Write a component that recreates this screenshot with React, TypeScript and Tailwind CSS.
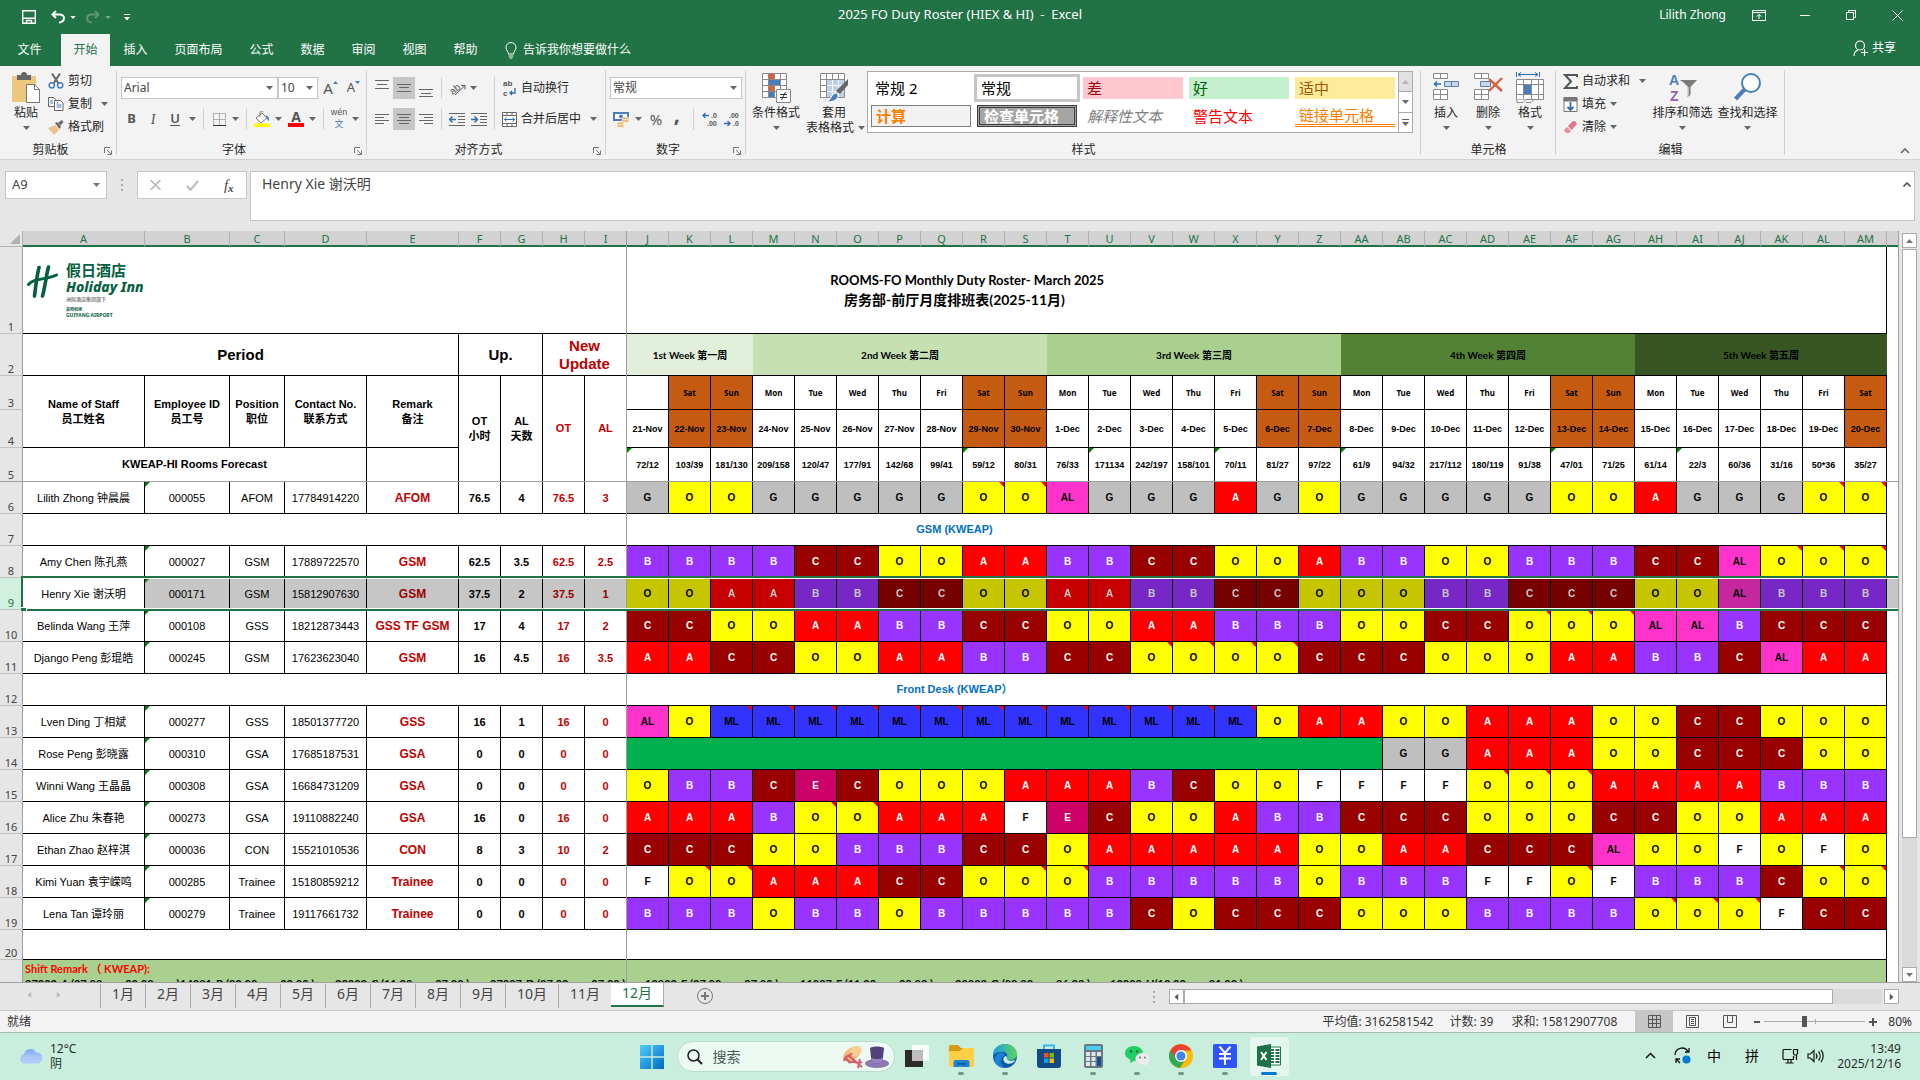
import React from 'react';

/* ---------- roster data ---------- */

type Staff = {
  row: number;
  name: string;
  id: string;
  pos: string;
  phone: string;
  remark: string;
  ot: string;
  al: string;
  newOt: string;
  newAl: string;
  shifts: string;
};

const COLS = 'A B C D E F G H I J K L M N O P Q R S T U V W X Y Z AA AB AC AD AE AF AG AH AI AJ AK AL AM'.split(' ');
const DAYS = ['', 'Sat', 'Sun', 'Mon', 'Tue', 'Wed', 'Thu', 'Fri', 'Sat', 'Sun', 'Mon', 'Tue', 'Wed', 'Thu', 'Fri', 'Sat', 'Sun', 'Mon', 'Tue', 'Wed', 'Thu', 'Fri', 'Sat', 'Sun', 'Mon', 'Tue', 'Wed', 'Thu', 'Fri', 'Sat'];
const DATES = Array.from({ length: 30 }, (_, i) => (i < 10 ? `${21 + i}-Nov` : `${i - 9}-Dec`));
const FORECAST = '72/12 103/39 181/130 209/158 120/47 177/91 142/68 99/41 59/12 80/31 76/33 171134 242/197 158/101 70/11 81/27 97/22 61/9 94/32 217/112 180/119 91/38 47/01 71/25 61/14 22/3 60/36 31/16 50*36 35/27'.split(' ');
const FLAGGED = [0, 8, 11, 14, 17, 22, 25];

const WEEKS: [string, number, string][] = [
  ['1st Week 第一周', 3, 'bg-[#e2efda]'],
  ['2nd Week 第二周', 7, 'bg-[#c6e0b4]'],
  ['3rd Week 第三周', 7, 'bg-[#a9d08e]'],
  ['4th Week 第四周', 7, 'bg-[#548235]'],
  ['5th Week 第五周', 6, 'bg-[#375623]'],
];

const s = (row: number, name: string, id: string, pos: string, phone: string, remark: string, ot: string, al: string, newOt: string, newAl: string, shifts: string): Staff => ({ row, name, id, pos, phone, remark, ot, al, newOt, newAl, shifts });

const LEAD = s(6, 'Lilith Zhong 钟晨晨', '000055', 'AFOM', '17784914220', 'AFOM', '76.5', '4', '76.5', '3', 'G O O G G G G G O* O* AL G G G A G O G G G G G O O A G G G O* O*');
const GSM = [
  s(8, 'Amy Chen 陈孔燕', '000027', 'GSM', '17889722570', 'GSM', '62.5', '3.5', '62.5', '2.5', 'B B B B C C O O A A B B C C O O A B B O O B B B C C AL O* O* O*'),
  s(9, 'Henry Xie 谢沃明', '000171', 'GSM', '15812907630', 'GSM', '37.5', '2', '37.5', '1', 'O O A A B B C C O O A A B B C C O O O B B C C C O O AL B B B'),
  s(10, 'Belinda Wang 王萍', '000108', 'GSS', '18212873443', 'GSS TF GSM', '17', '4', '17', '2', 'C C O O A A B B C C O O A A B B B O O C C O* O* O* AL AL B C C C'),
  s(11, 'Django Peng 彭琨皓', '000245', 'GSM', '17623623040', 'GSM', '16', '4.5', '16', '3.5', 'A A C C O O A A B B C C O* O* O* O* C C C O O O A A B B C AL A A'),
];
const DESK = [
  s(13, 'Lven Ding 丁相斌', '000277', 'GSS', '18501377720', 'GSS', '16', '1', '16', '0', 'AL O ML* ML* ML* ML* ML* ML* ML* ML* ML* ML* ML* ML* ML* O A A O O A A A O O C C O O O'),
  s(14, 'Rose Peng 彭晓露', '000310', 'GSA', '17685187531', 'GSA', '0', '0', '0', '0', 'LONG G G A A A O O C C C O O'),
  s(15, 'Winni Wang 王晶晶', '000308', 'GSA', '16684731209', 'GSA', '0', '0', '0', '0', 'O B B C E C O O O A A A B C O O F F F F O* O* O* A A A A B B B'),
  s(16, 'Alice Zhu 朱春艳', '000273', 'GSA', '19110882240', 'GSA', '16', '0', '16', '0', 'A A A B O* O* A A A F E C O O A B B C C C O O O C C O O A A A'),
  s(17, 'Ethan Zhao 赵梓淇', '000036', 'CON', '15521010536', 'CON', '8', '3', '10', '2', 'C C C O O B B B C C O A A A A A O O A A C C C AL O O F O F O'),
  s(18, 'Kimi Yuan 袁宇嵘鸣', '000285', 'Trainee', '15180859212', 'Trainee', '0', '0', '0', '0', 'F O* O* A A A C C O O* O* B B B B B O B B B F F O* F B B B C O* O*'),
  s(19, 'Lena Tan 谭玲丽', '000279', 'Trainee', '19117661732', 'Trainee', '0', '0', '0', '0', 'B B B O B B O B B B B B C O C C C O O O B B B B O* O* O* F C C'),
];

const TONE: Record<string, string> = {
  G: 'bg-[#bfbfbf] text-black',
  O: 'bg-[#ffff00] text-black',
  A: 'bg-[#ff0000] text-white',
  B: 'bg-[#9933ff] text-white',
  C: 'bg-[#990000] text-white',
  E: 'bg-[#cc0066] text-white',
  F: 'bg-white text-black',
  AL: 'bg-[#ff33cc] text-black',
  ML: 'bg-[#3333ff] text-black',
};
const TONE_SELECTED: Record<string, string> = {
  O: 'bg-[#c6c600] text-black',
  A: 'bg-[#c60000] text-[#c6c6c6]',
  B: 'bg-[#7727c6] text-[#c6c6c6]',
  C: 'bg-[#770000] text-[#c6c6c6]',
  AL: 'bg-[#c6279e] text-black',
};

const REMARKS = ['07003-A (07:00 —— 03:30 —— )', '14301-B (03:30 —— 23:00 )', '23003-C (11:00 —— 07:30 )', '07007-D (07:00 —— 07:00 )', '19003-E (07:00 —— 07:00 )', '11007-F (11:00 —— 08:00 )', '23003-G (09:00 —— 06:00 )', '13008-H(13:00 —— 21:00 )'];

/* ---------- sheet ---------- */

const Flag = () => <i className="absolute left-0 top-0 border-r-[5px] border-t-[5px] border-r-transparent border-t-[#008000]" />;
const Note = () => <i className="absolute right-0 top-0 border-l-[5px] border-t-[5px] border-l-transparent border-t-[#ff0000]" />;

function RowHead({ n, className }: { n: number; className: string }) {
  return (
    <th scope="row" className={`border-b border-r border-b-[#c2c2c2] border-r-[#9f9f9f] pb-px align-bottom text-[11px] font-normal leading-[11px] [font-family:'Noto_Sans',sans-serif] ${className || 'bg-[#e6e6e6] text-[#444]'}`}>
      {n}
    </th>
  );
}

const cell = 'relative border-b border-r border-black text-center';
const freeze = 'relative border-b border-r border-b-black border-r-[#9f9f9f] text-center';

function StaffRow({ p }: { p: Staff }) {
  const sel = p.row === 9;
  const dim = sel ? 'bg-[#c6c6c6]' : 'bg-white';
  const red = sel ? 'text-[#990000]' : 'text-[#c00000]';
  return (
    <tr className="h-8 text-[11px] leading-[14px]">
      <RowHead n={p.row} className={sel ? 'bg-[#d2f0e0] text-[#217346]' : ''} />
      <td className={`${cell} bg-white`}>
        {p.name}
        {sel && (
          <span className="pointer-events-none absolute -left-0.5 -top-0.5 z-10 h-[35px] w-[1890px] border-2 border-[#217346] shadow-[inset_0_0_0_1px_white]">
            <i className="absolute -bottom-0.5 -left-0.5 h-1 w-1.5 border-r border-t border-white bg-[#217346]" />
          </span>
        )}
      </td>
      <td className={`${cell} ${dim}`}><Flag />{p.id}</td>
      <td className={`${cell} ${dim}`}>{p.pos}</td>
      <td className={`${cell} ${dim}`}>{p.phone}</td>
      <td className={`${cell} ${dim} ${red} text-[12px] font-bold`}>{p.remark}</td>
      <td className={`${cell} ${dim} font-bold`}>{p.ot}</td>
      <td className={`${cell} ${dim} font-bold`}>{p.al}</td>
      <td className={`${cell} ${dim} ${red} font-bold`}>{p.newOt}</td>
      <td className={`${freeze} ${dim} ${red} font-bold`}>{p.newAl}</td>
      {p.shifts.split(' ').map((raw, i) => {
        if (raw === 'LONG') return <td key={i} colSpan={18} className={`${cell} bg-[#00b050]`} />;
        const code = raw.replace('*', '');
        return (
          <td key={i} className={`${cell} ${(sel ? TONE_SELECTED : TONE)[code]} text-[10px] font-bold`}>
            {code}
            {raw.endsWith('*') && <Note />}
          </td>
        );
      })}
      <td className={dim} />
    </tr>
  );
}

function SectionRow({ n, children }: { n: number; children?: React.ReactNode }) {
  return (
    <tr className={n === 20 ? 'h-[30px]' : 'h-8'}>
      <RowHead n={n} className="" />
      <td colSpan={39} className={`${cell} bg-white text-[11px] font-bold text-[#0070c0]`}>{children}</td>
      <td className="bg-white" />
    </tr>
  );
}

function Logo() {
  return (
    <div className="absolute left-1 top-4 flex items-start gap-2 text-left text-[#05603f]">
      <svg width="31" height="34" viewBox="0 0 31 34" className="mt-0.5 shrink-0" fill="none" stroke="#05603f" strokeLinecap="round">
        <path d="M12 2.500C10 10 9 18 7.500 31M21.500 2C19 11 18.500 20 15.500 31" strokeWidth="3.600" />
        <path d="M1.500 19.500C7 12.500 18 15.500 29.500 10" strokeWidth="3" />
      </svg>
      <div className="flex flex-col [font-family:'Noto_Sans','Noto_Sans_CJK_SC',sans-serif]">
        <span className="text-[15px] font-bold leading-[15px]">假日酒店</span>
        <span className="whitespace-nowrap text-[14px] font-extrabold italic leading-[17px]">Holiday Inn</span>
        <span className="text-[5px] leading-[8px] text-[#888]">洲际酒店集团旗下</span>
        <span className="pt-1 text-[4px] leading-[5px]">贵阳机场</span>
        <span className="text-[5px] font-bold leading-[6px]">GUIYANG AIRPORT</span>
      </div>
    </div>
  );
}

function Sheet() {
  const head = 'relative border-b border-r border-black bg-white text-center text-[11px] font-bold leading-[15px]';
  return (
    <div className="relative min-w-0 flex-1 overflow-hidden border-r border-[#9f9f9f] bg-white [font-family:'Liberation_Sans','Noto_Sans_CJK_SC',sans-serif]">
      <table className="w-full table-fixed border-separate border-spacing-0 whitespace-nowrap text-black">
        <colgroup>
          <col className="w-[23px]" />
          <col className="w-[122px]" />
          <col className="w-[85px]" />
          <col className="w-[55px]" />
          <col className="w-[82px]" />
          <col className="w-[92px]" />
          {Array.from({ length: 34 }, (_, i) => <col key={i} className="w-[42px]" />)}
          <col />
        </colgroup>
        <thead>
          <tr className="h-4">
            <th className="relative border-b border-r border-[#b1b1b1] bg-[#e6e6e6]" aria-label="全选">
              <i className="absolute bottom-0.5 right-0.5 border-b-[10px] border-l-[10px] border-b-[#b1b1b1] border-l-transparent" />
            </th>
            {COLS.map((c) => (
              <th key={c} scope="col" className="border-b-2 border-r border-b-[#217346] border-r-[#b1b1b1] bg-[#d2d2d2] text-[11px] font-normal leading-[13px] text-[#217346] [font-family:'Noto_Sans',sans-serif]">{c}</th>
            ))}
            <th className="border-b-2 border-[#217346] bg-[#d2d2d2]" />
          </tr>
        </thead>
        <tbody>
          <tr className="h-[87px]">
            <RowHead n={1} className="" />
            <td colSpan={39} className={`${cell} bg-white text-[13px] font-bold leading-[20px] [font-family:Lato,'Noto_Sans_CJK_SC',sans-serif]`}>
              <Logo />
              <p className="whitespace-pre">{'        ROOMS-FO Monthly Duty Roster- March 2025'}</p>
              <p className="text-[14px]">房务部-前厅月度排班表(2025-11月)</p>
            </td>
            <td />
          </tr>
          <tr className="h-[42px] text-[15px] font-bold leading-[18px]">
            <RowHead n={2} className="" />
            <td colSpan={5} className={cell}>Period</td>
            <td colSpan={2} className={cell}>Up.</td>
            <td colSpan={2} className={`${freeze} text-[#c00000]`}>New<br />Update</td>
            {WEEKS.map(([t, n, bg]) => (
              <td key={t} colSpan={n} className={`border-b border-black text-center text-[10px] [font-family:Lato,'Noto_Sans_CJK_SC',sans-serif] ${bg}`}>{t}</td>
            ))}
            <td />
          </tr>
          <tr className="h-[34px]">
            <RowHead n={3} className="" />
            <th rowSpan={2} className={head}>Name of Staff<br />员工姓名</th>
            <th rowSpan={2} className={head}>Employee ID<br />员工号</th>
            <th rowSpan={2} className={head}>Position<br />职位</th>
            <th rowSpan={2} className={head}>Contact No.<br />联系方式</th>
            <th rowSpan={2} className={head}>Remark<br />备注</th>
            <th rowSpan={3} className={head}>OT<br />小时</th>
            <th rowSpan={3} className={head}>AL<br />天数</th>
            <th rowSpan={3} className={`${head} text-[#c00000]`}>OT</th>
            <th rowSpan={3} className={`${freeze} text-[11px] text-[#c00000]`}>AL</th>
            {DAYS.map((d, i) => (
              <th key={i} className={`${cell} text-[8px] leading-[12px] [font-family:'Noto_Sans',sans-serif] ${d[0] === 'S' ? 'bg-[#c55a11]' : 'bg-white'}`}>{d}</th>
            ))}
            <td />
          </tr>
          <tr className="h-[38px]">
            <RowHead n={4} className="" />
            {DATES.map((d, i) => (
              <th key={d} className={`${cell} text-[9px] leading-[12px] ${DAYS[i][0] === 'S' ? 'bg-[#c55a11]' : 'bg-white'}`}>{d}</th>
            ))}
            <td />
          </tr>
          <tr className="h-[34px]">
            <RowHead n={5} className="" />
            <td colSpan={4} className={head}>KWEAP-HI Rooms Forecast</td>
            <td className={head} />
            {FORECAST.map((f, i) => (
              <td key={i} className={`${cell} text-[9px] font-bold leading-[12px]`}>
                {FLAGGED.includes(i) && <Flag />}
                {f}
              </td>
            ))}
            <td />
          </tr>
          <StaffRow p={LEAD} />
          <SectionRow n={7}>GSM (KWEAP)</SectionRow>
          {GSM.map((p) => <StaffRow key={p.row} p={p} />)}
          <SectionRow n={12}>Front Desk (KWEAP）</SectionRow>
          {DESK.map((p) => <StaffRow key={p.row} p={p} />)}
          <SectionRow n={20} />
          <tr className="h-[60px]">
            <RowHead n={21} className="" />
            <td colSpan={39} className="border-r border-black bg-[#a9d08e] pl-0.5 text-left align-top text-[11px] font-bold [font-family:Lato,'Noto_Sans_CJK_SC',sans-serif]">
              <p className="leading-[17px] text-[#ff0000]">Shift Remark （ KWEAP):</p>
              <p className="flex leading-[14px]">
                {REMARKS.map((r) => <span key={r} className="w-[155px]">{r}</span>)}
              </p>
            </td>
            <td />
          </tr>
        </tbody>
      </table>
      <i className="absolute inset-y-0 left-[626px] w-px bg-[#9f9f9f]" />
      <i className="absolute inset-x-0 top-[250px] h-px bg-[#9f9f9f]" />
    </div>
  );
}

/* ---------- small parts ---------- */

const Down = ({ className = 'text-[#666]' }: { className?: string }) => (
  <svg width="7" height="4" viewBox="0 0 7 4" className={`shrink-0 ${className}`} fill="currentColor"><path d="M0 0h7L3.500 4z" /></svg>
);

function Item({ className, label, children }: { className: string; label: string; children: React.ReactNode }) {
  return <button aria-label={label} className={`flex h-[22px] shrink-0 items-center justify-center ${className}`}>{children}</button>;
}

const Sep = ({ className }: { className: string }) => (
  <span className={`flex h-[22px] shrink-0 justify-center ${className}`}><i className="w-px bg-[#d2d2d2]" /></span>
);

function Group({ title, className, launcher, children }: { title: string; className: string; launcher?: boolean; children: React.ReactNode }) {
  return (
    <section className={`relative flex shrink-0 flex-col after:absolute after:bottom-1 after:right-0 after:top-1 after:w-px after:bg-[#d2d2d2] ${className}`}>
      <div className="flex h-[76px]">{children}</div>
      <h2 className="text-center text-[12px] leading-4">{title}</h2>
      {launcher && (
        <button aria-label={`${title}设置`} className="absolute bottom-1 right-[5px]">
          <svg width="8" height="8" viewBox="0 0 8 8" fill="none" stroke="#777"><path d="M.5 6V.5H6M3 3l4 4M7.500 3.500v4h-4" /></svg>
        </button>
      )}
    </section>
  );
}

function Big({ label, className, down = true, children }: { label: string; className: string; down?: boolean; children: React.ReactNode }) {
  return (
    <button className={`flex shrink-0 flex-col items-center pt-[6px] text-[12px] leading-[14px] ${className}`}>
      <span className="flex h-[34px] items-start">{children}</span>
      <span className="whitespace-nowrap">{label}</span>
      {down && <Down className="mt-1.5 text-[#666]" />}
    </button>
  );
}

function Lines({ rows }: { rows: [number, number, number][] }) {
  return (
    <svg width="14" height="20" viewBox="0 0 14 20" stroke="#666">
      {rows.map(([y, a, b]) => <path key={y} d={`M${a} ${y}H${b}`} />)}
    </svg>
  );
}

const TableIcon = ({ children }: { children?: React.ReactNode }) => (
  <svg width="30" height="31" viewBox="0 0 30 31" fill="none">
    <path d="M1.500 1.500h24v24h-24zM1.500 7.500h24M1.500 13.500h24M1.500 19.500h24M7.500 1.500v24M13.500 1.500v24M19.500 1.500v24" fill="#fff" stroke="#8a8a8a" />
    {children}
  </svg>
);

function FieldSelect({ label, value, className }: { label: string; value: string; className: string }) {
  return (
    <span className={`relative flex h-[22px] shrink-0 items-center border border-[#c6c6c6] bg-white ${className}`}>
      <select aria-label={label} defaultValue={value} className="h-full w-full appearance-none bg-transparent pl-0.5 text-[12px] text-[#444] outline-none">
        <option>{value}</option>
      </select>
      <span className="pointer-events-none absolute right-1"><Down /></span>
    </span>
  );
}

/* ---------- title and tabs ---------- */

function TitleBar() {
  return (
    <header className="grid h-[34px] shrink-0 grid-cols-[1fr_auto_1fr] items-center bg-[#217346] pb-1 text-[12px] text-white">
      <div className="flex items-center pl-[22px] pt-1">
        <button aria-label="保存"><svg width="14" height="14" viewBox="0 0 14 14" fill="none" stroke="#fff" strokeWidth="1.400"><path d="M.7.7h12.600v12.600H.7zM.7 8.200h12.600M4.500 13V10.500h5V13" /></svg></button>
        <button aria-label="撤消" className="ml-[15px]"><svg width="14" height="14" viewBox="0 0 14 14" fill="none" stroke="#fff" strokeWidth="2"><path d="M5 1L1.500 4.500 5 8M1.500 4.500H8.500C15 4.500 14 12 8 12.500" /></svg></button>
        <Down className="ml-[5px] h-[3px] w-[6px] text-white" />
        <button aria-label="恢复" className="ml-[10px] opacity-25"><svg width="14" height="14" viewBox="0 0 14 14" fill="none" stroke="#fff" strokeWidth="2"><path d="M9 1l3.500 3.500L9 8M12.500 4.500H5.500C-1 4.500 0 12 6 12.500" /></svg></button>
        <Down className="ml-[5px] h-[3px] w-[6px] text-white opacity-40" />
        <button aria-label="自定义快速访问工具栏" className="ml-[13px]"><svg width="6" height="7" viewBox="0 0 6 7" fill="#fff"><path d="M0 0h6v1H0zM0 3h6L3 6.500z" /></svg></button>
      </div>
      <h1 className="whitespace-pre text-[13px]">{'2025 FO Duty Roster (HIEX & HI)  -  Excel'}</h1>
      <div className="flex items-center justify-end">
        <span className="mr-[10px]">Lilith Zhong</span>
        <button aria-label="功能区显示选项" className="flex w-[46px] justify-center"><svg width="14" height="11" viewBox="0 0 14 11" fill="none" stroke="#fff"><path d="M.5.5h13v10H.5zM.5 2.500h13M7 9V4.500M4.800 6.500L7 4.300l2.200 2.200" /></svg></button>
        <button aria-label="最小化" className="flex w-[46px] justify-center"><i className="h-px w-[10px] bg-white" /></button>
        <button aria-label="向下还原" className="flex w-[46px] justify-center"><svg width="10" height="10" viewBox="0 0 10 10" fill="none" stroke="#fff"><path d="M.5 2.500h7v7h-7zM2.500 2.500v-2h7v7h-2" /></svg></button>
        <button aria-label="关闭" className="flex w-[46px] justify-center"><svg width="11" height="11" viewBox="0 0 11 11" stroke="#fff"><path d="M.5.5l10 10M10.500.5l-10 10" /></svg></button>
      </div>
    </header>
  );
}

function TabBar() {
  return (
    <nav className="flex h-8 shrink-0 items-stretch bg-[#217346] text-[12px] text-white">
      <button className="w-[61px] pr-0.5">文件</button>
      <button className="w-[49px] bg-[#f3f3f3] text-[#217346]">开始</button>
      {['插入', '页面布局', '公式', '数据', '审阅', '视图', '帮助'].map((t) => (
        <button key={t} className={t.length > 2 ? 'w-[75px]' : 'w-[51px]'}>{t}</button>
      ))}
      <button className="flex items-center gap-1.5 pl-[14px]">
        <svg width="12" height="17" viewBox="0 0 12 17" fill="none" stroke="#fff"><path d="M3.500 12C3.500 9.500 1 8.500 1 5.500a5 5 0 0110 0C11 8.500 8.500 9.500 8.500 12zM3.500 14h5M4.500 16h3" /></svg>
        告诉我你想要做什么
      </button>
      <button className="ml-auto flex items-center gap-1 pb-1 pr-6">
        <svg width="15" height="17" viewBox="0 0 15 17" fill="none" stroke="#fff" strokeWidth="1.200"><circle cx="7" cy="5.500" r="4.500" /><path d="M1 16c0-3 1.500-5 4-6M8 12.500h7M11.500 9v7" /></svg>
        共享
      </button>
    </nav>
  );
}

/* ---------- ribbon ---------- */

const galleryBase = 'flex h-[22px] items-center px-1 text-left text-[15px] leading-[20px] whitespace-nowrap';

function Ribbon() {
  return (
    <div className="flex h-[94px] shrink-0 border-b border-[#d2d2d2] bg-[#f3f3f3] text-[#262626]">
      <Group title="剪贴板" className="w-[117px] [&>h2]:pr-4" launcher>
        <Big label="粘贴" className="ml-[10px] w-[32px]">
          <svg width="30" height="31" viewBox="0 0 30 31"><path d="M1 4h24v26H1z" fill="#eec77f" /><path d="M6 3h4a3 3 0 016 0h4v5H6z" fill="#666" /><path d="M15.500 12.500h8l5 5v13h-13z" fill="#fff" stroke="#777" /><path d="M23.500 12.500v5h5" fill="none" stroke="#777" /></svg>
        </Big>
        <div className="flex flex-col gap-[9px] pl-[6px] pt-2 text-[12px] leading-[14px]">
          <button className="flex h-[14px] items-center gap-1">
            <svg width="16" height="16" viewBox="0 0 16 16" fill="none"><path d="M4 .5l6.500 10M12 .5l-6.500 10" stroke="#666" strokeWidth="2" /><circle cx="3.800" cy="12.300" r="2.600" stroke="#4a7ebb" strokeWidth="1.500" /><circle cx="12.200" cy="12.300" r="2.600" stroke="#4a7ebb" strokeWidth="1.500" /></svg>
            剪切
          </button>
          <button className="flex h-[14px] items-center gap-1">
            <svg width="16" height="14" viewBox="0 0 16 14" fill="#fff" stroke="#666"><path d="M.5.500h5l2 2v7h-7z" /><path d="M6.500 3.500h6l2.500 2.500v7.500H6.500z" /><path d="M2 4h3M2 6h3M8.500 8h5M8.500 10h5M8.500 6h2" stroke="#4a7ebb" /></svg>
            复制
            <span className="pl-[5px]"><Down /></span>
          </button>
          <button className="flex h-[14px] items-center gap-1">
            <svg width="16" height="15" viewBox="0 0 16 15"><path d="M0 8l7-3 4 5-5 5z" fill="#eec08a" /><path d="M7 3l2-1 4 5-1.500 2zM10 3l4-3 1.500 2-3 3.500z" fill="#666" /></svg>
            格式刷
          </button>
        </div>
      </Group>

      <Group title="字体" className="w-[250px] [&>h2]:pr-4" launcher>
        <div className="flex flex-col gap-[9px] pl-1 pt-[11px]">
          <div className="flex items-center">
            <FieldSelect label="字体" value="Arial" className="w-[157px]" />
            <FieldSelect label="字号" value="10" className="w-[40px]" />
            <Item label="增大字号" className="w-[25px] text-[15px] text-[#555]">A<svg width="5" height="3" viewBox="0 0 5 3" className="mb-3" fill="#4a7ebb"><path d="M0 3h5L2.500 0z" /></svg></Item>
            <Item label="减小字号" className="w-[21px] text-[13px] text-[#555]">A<svg width="5" height="3" viewBox="0 0 5 3" className="mb-3" fill="#4a7ebb"><path d="M0 0h5L2.500 3z" /></svg></Item>
          </div>
          <div className="flex items-center text-[#555]">
            <Item label="加粗" className="w-[21px] text-[13px] font-bold">B</Item>
            <Item label="倾斜" className="w-[22px] text-[14px] italic [font-family:'Liberation_Serif',serif]">I</Item>
            <Item label="下划线" className="w-[22px] text-[13px] font-semibold underline underline-offset-2">U</Item>
            <Item label="下划线样式" className="w-3"><Down /></Item>
            <Sep className="w-[10px]" />
            <Item label="边框" className="w-[22px]"><svg width="13" height="13" viewBox="0 0 13 13" fill="none" stroke="#777" strokeDasharray="1 1"><path d="M.5.5h12v12M.5.5v12M6.500.5v12M.5 6.500h12" /><path d="M0 12.500h13" stroke="#333" strokeDasharray="none" /></svg></Item>
            <Item label="边框样式" className="w-[10px]"><Down /></Item>
            <Sep className="w-3" />
            <Item label="填充颜色" className="w-5"><svg width="16" height="16" viewBox="0 0 16 16"><path d="M2 7l6-5 5 5-6 5z" fill="#fff" stroke="#777" /><path d="M6 6V1.500a1.500 1.500 0 013 0" fill="none" stroke="#777" /><path d="M11 4.500c3 0 4.500 2 4 6l-2-3z" fill="#4a7ebb" /><path d="M0 12.500h16V16H0z" fill="#ff0" /></svg></Item>
            <Item label="填充颜色选项" className="w-3"><Down /></Item>
            <Item label="字体颜色" className="w-6"><span className="flex h-4 w-4 items-end justify-center border-b-[4px] border-[#f00] text-[14px] font-bold leading-[13px]">A</span></Item>
            <Item label="字体颜色选项" className="w-2"><Down /></Item>
            <Sep className="w-[14px]" />
            <Item label="拼音" className="w-[18px] flex-col text-[9px] leading-[11px] [font-family:'Liberation_Sans','Noto_Sans_CJK_SC',sans-serif]"><span>wén</span><span className="leading-[13px] text-[#4a7ebb]">文</span></Item>
            <Item label="拼音选项" className="w-[14px]"><Down /></Item>
          </div>
        </div>
      </Group>

      <Group title="对齐方式" className="w-[239px] [&>h2]:pr-4" launcher>
        <div className="flex flex-col gap-[9px] pl-1 pt-[11px]">
          <div className="flex items-center">
            <Item label="顶端对齐" className="w-[22px]"><Lines rows={[[2.5, 0, 14], [6.5, 2, 12], [10.5, 0, 14]]} /></Item>
            <Item label="垂直居中" className="w-[22px] bg-[#c6c6c6]"><Lines rows={[[6.5, 0, 14], [9.5, 2, 12], [13.5, 0, 14]]} /></Item>
            <Item label="底端对齐" className="w-[22px]"><Lines rows={[[11.5, 0, 14], [15.5, 2, 12], [18.5, 0, 14]]} /></Item>
            <Sep className="w-2" />
            <Item label="方向" className="w-6"><svg width="17" height="15" viewBox="0 0 17 15" className="overflow-visible" fill="none" stroke="#555"><text x="0" y="12" transform="rotate(-40 5 8)" fill="#555" stroke="none" fontSize="10" fontFamily="Liberation Sans">ab</text><path d="M6 14L15.500 5M12 4.500h4v4" /></svg></Item>
            <Item label="方向选项" className="w-2"><Down /></Item>
          </div>
          <div className="flex items-center">
            <Item label="左对齐" className="w-[22px]"><Lines rows={[[5.5, 0, 14], [8.5, 0, 9], [11.5, 0, 14], [14.5, 0, 9]]} /></Item>
            <Item label="居中" className="w-[22px] bg-[#c6c6c6]"><Lines rows={[[5.5, 0, 14], [8.5, 2, 12], [11.5, 0, 14], [14.5, 2, 12]]} /></Item>
            <Item label="右对齐" className="w-[22px]"><Lines rows={[[5.5, 0, 14], [8.5, 5, 14], [11.5, 0, 14], [14.5, 5, 14]]} /></Item>
            <Sep className="w-2" />
            <Item label="减少缩进" className="w-6"><svg width="16" height="13" viewBox="0 0 16 13" fill="none" stroke="#666"><path d="M0 .5h16M9 3.500h7M9 6.500h7M9 9.500h7M0 12.500h16" /><path d="M0 6.500h7M3.500 3.500l-3 3 3 3" stroke="#2e6db4" strokeWidth="1.500" /></svg></Item>
            <Item label="增加缩进" className="w-5"><svg width="16" height="13" viewBox="0 0 16 13" fill="none" stroke="#666"><path d="M0 .5h16M9 3.500h7M9 6.500h7M9 9.500h7M0 12.500h16" /><path d="M0 6.500h7M3.500 3.500l3 3-3 3" stroke="#2e6db4" strokeWidth="1.500" /></svg></Item>
          </div>
        </div>
        <i className="ml-[5px] mt-[10px] h-[54px] w-px shrink-0 bg-[#d2d2d2]" />
        <div className="flex flex-col gap-[9px] pl-[7px] pt-[11px] text-[12px]">
          <button className="flex h-[22px] items-center gap-1">
            <svg width="15" height="18" viewBox="0 0 15 18" className="overflow-visible" fontFamily="Liberation Sans" fontSize="8" fontWeight="bold" fill="#555"><text x="1" y="7">ab</text><text x="1" y="17">c</text><path d="M13 9v5H8M10 12l-2 2 2 2" fill="none" stroke="#2e6db4" strokeWidth="1.300" /></svg>
            自动换行
          </button>
          <button className="flex h-[22px] items-center gap-1">
            <svg width="15" height="15" viewBox="0 0 15 15" fill="#fff" stroke="#666"><path d="M.5.5h14v14H.5zM.5 3.500h14M.5 11.500h14M5 .5v3M10 .5v3M5 11.500v3M10 11.500v3" /><path d="M2.500 7.500h10M4.500 5.500l-2 2 2 2M10.500 5.500l2 2-2 2" fill="none" stroke="#2e6db4" /></svg>
            合并后居中
            <span className="pl-[5px]"><Down /></span>
          </button>
        </div>
      </Group>

      <Group title="数字" className="w-[140px] [&>h2]:pr-4" launcher>
        <div className="flex flex-col gap-[9px] pl-1 pt-[11px]">
          <FieldSelect label="数字格式" value="常规" className="w-[132px]" />
          <div className="flex items-center text-[#555]">
            <Item label="会计格式" className="w-[22px]"><svg width="17" height="17" viewBox="0 0 17 17"><path d="M0 1h16v9H0z" fill="#4a7ebb" /><path d="M2 3h12v5H2z" fill="#fff" /><circle cx="8" cy="5.500" r="2" fill="#4a7ebb" /><g fill="#eebf73" stroke="#fff" strokeWidth=".5"><rect x="9" y="6" width="7" height="3" rx="1.500" /><rect x="9" y="8.500" width="7" height="3" rx="1.500" /><rect x="4" y="11" width="7" height="3" rx="1.500" /><rect x="4" y="13.500" width="7" height="3" rx="1.500" /></g></svg></Item>
            <Item label="会计格式选项" className="w-3"><Down /></Item>
            <Item label="百分比样式" className="w-6 text-[15px]">%</Item>
            <Item label="千位分隔样式" className="w-[18px] pb-3 text-[22px] font-bold">,</Item>
            <Sep className="w-[14px]" />
            <Item label="增加小数位数" className="w-5"><svg width="16" height="16" viewBox="0 0 16 16" fontSize="7" fontFamily="Liberation Sans" fontWeight="bold" fill="#555"><text x="9" y="7">.0</text><text x="5" y="15">.00</text><path d="M7 4.500H1M3.500 2L1 4.500 3.500 7" fill="none" stroke="#2e6db4" strokeWidth="1.300" /></svg></Item>
            <Item label="减少小数位数" className="w-6"><svg width="16" height="16" viewBox="0 0 16 16" fontSize="7" fontFamily="Liberation Sans" fontWeight="bold" fill="#555"><text x="5" y="7">.00</text><text x="9" y="15">.0</text><path d="M0 12.500h6M3.500 10L6 12.500 3.500 15" fill="none" stroke="#2e6db4" strokeWidth="1.300" /></svg></Item>
          </div>
        </div>
      </Group>

      <Group title="样式" className="w-[675px]">
        <Big label="条件格式" className="ml-[5px] w-[50px]">
          <TableIcon>
            <path d="M8 2h5v5H8zM8 14h5v5H8z" fill="#d9603b" /><path d="M8 8h11v5H8zM8 20h5v5H8z" fill="#4a7ebb" />
            <path d="M15.500 17.500h14v13h-14z" fill="#fff" stroke="#8a8a8a" /><path d="M19 22.500h7M19 25.500h7M24.500 20l-4 8" stroke="#333" />
          </TableIcon>
        </Big>
        <div className="ml-[5px] flex w-[61px] flex-col">
          <Big label="套用" className="w-[56px]" down={false}>
            <TableIcon>
              <path d="M8 8h17v17H8z" fill="#bdd0e9" /><path d="M8 13.500h17M8 19.500h17M13.500 8v17M19.500 8v17" stroke="#fff" />
              <path d="M29 7v6l-8 9-4-3z" fill="#666" /><path d="M8 30c4-2 4-8 9-9 4 1 3 9-9 9z" fill="#4a7ebb" stroke="#fff" />
            </TableIcon>
          </Big>
          <button className="flex items-center gap-1 whitespace-nowrap text-[12px] leading-[16px]">表格格式<Down /></button>
        </div>
        <div className="mt-[5px] flex h-[62px] w-[546px] border border-[#ababab] bg-white">
          <div className="grid flex-1 grid-cols-5 content-center gap-1.5 px-[3px] [font-family:'Noto_Sans','Noto_Sans_CJK_SC',sans-serif]">
            <button className={`${galleryBase} text-black`}>常规 2</button>
            <button className={`${galleryBase} bg-white text-black shadow-[0_0_0_3px_#c6c6c6]`}>常规</button>
            <button className={`${galleryBase} bg-[#ffc7ce] text-[#9c0006]`}>差</button>
            <button className={`${galleryBase} bg-[#c6efce] text-[#006100]`}>好</button>
            <button className={`${galleryBase} bg-[#ffeb9c] text-[#9c5700]`}>适中</button>
            <button className={`${galleryBase} border border-[#7f7f7f] bg-[#f2f2f2] font-bold text-[#fa7d00]`}>计算</button>
            <button className={`${galleryBase} border-[3px] border-double border-[#3f3f3f] bg-[#a5a5a5] font-bold text-white`}>检查单元格</button>
            <button className={`${galleryBase} italic text-[#7f7f7f]`}>解释性文本</button>
            <button className={`${galleryBase} text-[#ff0000]`}>警告文本</button>
            <button className={`${galleryBase} border-b-[3px] border-double border-[#ff8001] text-[#fa7d00]`}>链接单元格</button>
          </div>
          <div className="flex w-[14px] flex-col border-l border-[#ababab]">
            <button aria-label="上一行" className="flex flex-1 items-center justify-center bg-[#e1e1e1]"><Down className="rotate-180 text-[#b5b5b5]" /></button>
            <button aria-label="下一行" className="flex flex-1 items-center justify-center border-t border-[#ababab]"><Down /></button>
            <button aria-label="其他" className="flex flex-1 flex-col items-center justify-center gap-0.5 border-t border-[#ababab]"><i className="h-px w-[7px] bg-[#666]" /><Down /></button>
          </div>
        </div>
      </Group>

      <Group title="单元格" className="w-[135px]">
        <Big label="插入" className="ml-1 w-[42px]">
          <svg width="28" height="28" viewBox="0 0 28 28" fill="#fff" stroke="#8a8a8a"><path d="M1.500 1.500h14v5h-14zM8.500 1.500v5M1.500 17.500h14v10h-14zM8.500 17.500v10M1.500 22.500h14" /><path d="M12.500 9.500h14v5h-14zM19.500 9.500v5" fill="#c5d7ec" stroke="#5b7fa8" /><path d="M9 12H2.500M5 9.500L2.500 12 5 14.500" fill="none" stroke="#2e6db4" strokeWidth="1.600" /></svg>
        </Big>
        <Big label="删除" className="w-[42px]">
          <svg width="30" height="28" viewBox="0 0 30 28" fill="#fff" stroke="#8a8a8a"><path d="M1.500 1.500h14v5h-14zM8.500 1.500v5M1.500 17.500h14v10h-14zM8.500 17.500v10M1.500 22.500h14" /><path d="M7.500 9.500h10v5h-10z" fill="#c5d7ec" stroke="#5b7fa8" /><path d="M16 7l13 12M29 6L16 19" stroke="#d9603b" strokeWidth="2.400" /></svg>
        </Big>
        <Big label="格式" className="w-[42px]">
          <svg width="28" height="31" viewBox="0 0 28 31" fill="#fff" stroke="#8a8a8a"><path d="M.5 7.500h27v20H.5zM.5 12.500h27M.5 22.500h27M7.500 7.500v20M15.500 7.500v20M22.500 7.500v20" /><path d="M8 13h7v9H8z" fill="#4a7ebb" stroke="none" /><path d="M1 27.500v3h6l3-3M10 30.500h5l3-3" /><path d="M.5 0v5M23.500 0v5M2 2.500h20M5 .5l-3 2 3 2M19 .5l3 2-3 2" fill="none" stroke="#2e6db4" /></svg>
        </Big>
      </Group>

      <Group title="编辑" className="w-[229px]">
        <div className="flex w-[94px] flex-col gap-[9px] pl-[7px] pt-2 text-[12px] leading-[14px]">
          <button className="flex h-[14px] items-center gap-1 whitespace-nowrap"><svg width="15" height="15" viewBox="0 0 15 15" fill="none" stroke="#555" strokeWidth="2"><path d="M14 3V1H2l6 6.500L2 14h12v-2" /></svg>自动求和<span className="pl-[5px]"><Down /></span></button>
          <button className="flex h-[14px] items-center gap-1"><svg width="15" height="15" viewBox="0 0 15 15" fill="#fff" stroke="#777"><path d="M1 .5h13v14H1z" /><path d="M1 1h13v3H1z" fill="#777" /><path d="M7.500 5v8M4.500 10l3 3 3-3" fill="none" stroke="#2e6db4" strokeWidth="1.800" /></svg>填充<Down /></button>
          <button className="flex h-[14px] items-center gap-1"><svg width="15" height="13" viewBox="0 0 15 13"><path d="M1 9l3-3 4 4-2 2H3z" fill="#ef8b9f" /><path d="M5 5l5-5h2l2 3-5.500 6z" fill="#e5738c" /></svg>清除<Down /></button>
        </div>
        <Big label="排序和筛选" className="w-[65px]">
          <svg width="30" height="31" viewBox="0 0 30 31" fontFamily="Liberation Sans" fontSize="14" fontWeight="bold"><text x="1" y="13" fill="#4a7ebb">A</text><text x="2" y="29" fill="#9464b4">Z</text><path d="M12 8h17l-6.500 7v8l-3 2V15z" fill="#7a7a7a" /><path d="M14 9.500l6 6v8" fill="none" stroke="#fff" /></svg>
        </Big>
        <Big label="查找和选择" className="w-[65px]">
          <svg width="29" height="29" viewBox="0 0 29 29" fill="none" stroke="#4a7ebb"><circle cx="18" cy="11" r="9" strokeWidth="2" fill="#fff" /><path d="M11.500 17.500L2.500 27" strokeWidth="4" /></svg>
        </Big>
      </Group>
      <button aria-label="折叠功能区" className="ml-auto self-end pb-[5px] pr-[10px]"><svg width="10" height="6" viewBox="0 0 10 6" fill="none" stroke="#666" strokeWidth="1.600"><path d="M1 5l4-4 4 4" /></svg></button>
    </div>
  );
}

function FormulaBar() {
  return (
    <div className="flex h-[70px] shrink-0 items-start bg-[#e6e6e6] pb-[10px] pl-[5px] pr-[5px] pt-[10px] text-[#444]">
      <span className="relative flex h-7 w-[102px] items-center border border-[#c6c6c6] bg-white">
        <input aria-label="名称框" defaultValue="A9" className="w-full pl-1.5 text-[13px] outline-none" />
        <Down className="absolute right-[6px] text-[#777]" />
      </span>
      <span className="flex h-7 w-[30px] flex-col items-center justify-center gap-[3px]">
        <i className="h-0.5 w-0.5 bg-[#aaa]" /><i className="h-0.5 w-0.5 bg-[#aaa]" /><i className="h-0.5 w-0.5 bg-[#aaa]" />
      </span>
      <span className="flex h-7 w-[110px] items-center justify-around border border-[#c6c6c6] bg-white">
        <button aria-label="取消"><svg width="11" height="10" viewBox="0 0 11 10" stroke="#bbb" strokeWidth="1.600"><path d="M.5 0l10 10M10.500 0l-10 10" /></svg></button>
        <button aria-label="输入"><svg width="13" height="11" viewBox="0 0 13 11" fill="none" stroke="#bbb" strokeWidth="2"><path d="M1 6l3.500 4L12 1" /></svg></button>
        <button aria-label="插入函数" className="text-[15px] italic leading-none [font-family:'Liberation_Serif',serif]">f<sub className="text-[11px] font-bold">x</sub></button>
      </span>
      <span className="ml-[3px] flex h-[50px] flex-1 items-start border border-[#c6c6c6] bg-white">
        <textarea aria-label="编辑栏" defaultValue="Henry Xie 谢沃明" className="h-full flex-1 resize-none pl-[11px] pt-0.5 text-[14px] leading-[20px] outline-none" />
        <button aria-label="折叠编辑栏" className="pr-[3px] pt-[10px]"><svg width="8" height="5" viewBox="0 0 8 5" fill="none" stroke="#555" strokeWidth="1.600"><path d="M.5 4.500L4 1l3.500 3.500" /></svg></button>
      </span>
    </div>
  );
}

/* ---------- lower bars ---------- */

const scrollBtn = 'flex h-[15px] w-[15px] shrink-0 items-center justify-center border border-[#ababab] bg-white';

function VScroll() {
  return (
    <div className="flex w-[21px] shrink-0 flex-col bg-[#e6e6e6] pl-[3px] pt-0.5">
      <button aria-label="向上滚动" className={scrollBtn}><Down className="rotate-180 text-[#777]" /></button>
      <div className="mt-px flex w-[15px] flex-1 flex-col bg-[#dadada]"><i className="h-[82%] border border-[#ababab] bg-white" /></div>
      <button aria-label="向下滚动" className={scrollBtn}><Down className="text-[#777]" /></button>
    </div>
  );
}

function SheetTabs() {
  const tab = 'relative border-l border-[#ababab] text-[14px] leading-[20px] text-[#444] h-6 pb-1';
  return (
    <div className="flex h-[28px] shrink-0 items-start border-t border-[#9f9f9f] bg-[#e6e6e6]">
      <div className="flex h-6 w-[100px] items-center gap-[22px] pl-[26px] text-[#bbb]">
        <Down className="rotate-90" />
        <Down className="-rotate-90" />
      </div>
      <div className="flex items-start pt-px">
        {Array.from({ length: 11 }, (_, i) => (
          <button key={i} className={`${tab} ${i > 8 ? 'w-[53px]' : 'w-[45px]'}`}>{i + 1}月</button>
        ))}
      </div>
      <button className="h-6 w-[53px] border-b-2 border-r border-b-[#217346] border-r-[#ababab] bg-white pb-0.5 text-[14px] leading-[20px] text-[#217346]">12月</button>
      <button aria-label="新工作表" className="ml-[33px] mt-[5px]"><svg width="16" height="16" viewBox="0 0 16 16" fill="none" stroke="#777"><circle cx="8" cy="8" r="7.500" /><path d="M8 4v8M4 8h8" strokeWidth="2" /></svg></button>
      <div className="ml-auto flex w-[60%] max-w-[746px] items-center pt-[6px]">
        <span className="flex w-4 flex-col gap-[3px]"><i className="h-0.5 w-0.5 bg-[#aaa]" /><i className="h-0.5 w-0.5 bg-[#aaa]" /><i className="h-0.5 w-0.5 bg-[#aaa]" /></span>
        <button aria-label="向左滚动" className={scrollBtn}><Down className="rotate-90 text-[#555]" /></button>
        <div className="mr-0.5 flex h-[15px] flex-1 bg-[#dadada]"><i className="w-[93%] border border-[#ababab] bg-white" /></div>
        <button aria-label="向右滚动" className={scrollBtn}><Down className="-rotate-90 text-[#555]" /></button>
      </div>
      <span className="w-[21px]" />
    </div>
  );
}

function StatusBar() {
  return (
    <footer className="flex h-[23px] shrink-0 items-center border-b border-t border-b-[#a5bdb2] border-t-[#c6c6c6] bg-[#f3f3f3] text-[12px] text-[#333]">
      <span className="pl-[7px]">就绪</span>
      <span className="ml-auto">平均值: 3162581542</span>
      <span className="ml-4">计数: 39</span>
      <span className="ml-[18px] mr-[18px]">求和: 15812907708</span>
      <button aria-label="普通" className="flex h-full w-[38px] items-center justify-center bg-[#c6c6c6]"><svg width="13" height="13" viewBox="0 0 13 13" fill="none" stroke="#555"><path d="M.5.5h12v12H.5zM4.500.5v12M8.500.5v12M.5 4.500h12M.5 8.500h12" /></svg></button>
      <button aria-label="页面布局" className="flex w-[38px] justify-center"><svg width="13" height="13" viewBox="0 0 13 13" fill="none" stroke="#555"><path d="M.5.5h12v12H.5zM3.500 2.500h6v8h-6zM5 4.500h3M5 6.500h3M5 8.500h3" /></svg></button>
      <button aria-label="分页预览" className="flex w-[38px] justify-center"><svg width="14" height="13" viewBox="0 0 14 13" fill="none" stroke="#555"><path d="M.5.500h13v12H.5zM4.500.5v7h5v-7" /></svg></button>
      <button aria-label="缩小" className="ml-[5px] h-0.5 w-1.5 bg-[#555]" />
      <span className="relative mx-1 flex h-3 w-[101px] items-center">
        <i className="h-px w-full bg-[#aaa]" />
        <i className="absolute left-1/2 h-[5px] w-px bg-[#aaa]" />
        <input type="range" aria-label="缩放" min={0} max={100} defaultValue={39} className="absolute inset-0 w-full cursor-pointer appearance-none bg-transparent [&::-webkit-slider-thumb]:h-[11px] [&::-webkit-slider-thumb]:w-[5px] [&::-webkit-slider-thumb]:appearance-none [&::-webkit-slider-thumb]:bg-[#555]" />
      </span>
      <button aria-label="放大"><svg width="8" height="8" viewBox="0 0 8 8" stroke="#555" strokeWidth="2"><path d="M0 4h8M4 0v8" /></svg></button>
      <span className="ml-[11px] mr-2">80%</span>
    </footer>
  );
}

/* ---------- taskbar ---------- */

function Pinned({ label, state, children }: { label: string; state?: 'run' | 'on'; children: React.ReactNode }) {
  return (
    <button aria-label={label} className={`relative flex h-[39px] w-[39px] items-center justify-center rounded-[4px] pb-0.5 ${state === 'on' ? 'bg-[#e3f7ee]' : ''}`}>
      {children}
      {state === 'run' && <i className="absolute bottom-px h-[3px] w-1.5 rounded-full bg-[#75958a]" />}
      {state === 'on' && <i className="absolute bottom-px h-[3px] w-4 rounded-full bg-[#0078d4]" />}
    </button>
  );
}

function Taskbar() {
  return (
    <div className="grid h-[47px] shrink-0 grid-cols-[1fr_auto_1fr] items-center bg-[#c9eedd] text-[12px] text-[#1f2f29]">
      <button className="flex items-center gap-[7px] justify-self-start pb-0.5 pl-[19px] text-left leading-[15px]">
        <svg width="24" height="17" viewBox="0 0 24 17"><defs><linearGradient id="cl" x1="0" y1="0" x2="0" y2="1"><stop offset="0" stopColor="#7fa6f0" /><stop offset="1" stopColor="#cfe0fb" /></linearGradient></defs><path d="M5 16.500a5 5 0 010-9.500A6.500 6.500 0 0117 5.500a5.500 5.500 0 011.500 11z" fill="url(#cl)" /><path d="M1 12c5-6 8 0 12-1s7-4 10 0a5 5 0 01-4.500 5.500H5A5 5 0 011 12z" fill="#a9c4f5" opacity=".7" /></svg>
        <span>12°C<br />阴</span>
      </button>

      <div className="flex items-center">
        <button aria-label="开始" className="flex w-[44px] justify-center">
          <svg width="24" height="24" viewBox="0 0 24 24"><defs><linearGradient id="wn" x1="0" y1="0" x2="1" y2="1"><stop offset="0" stopColor="#4fd0f9" /><stop offset="1" stopColor="#0067c5" /></linearGradient></defs><path d="M0 0h11.300v11.300H0zM12.700 0H24v11.300H12.700zM0 12.700h11.300V24H0zM12.700 12.700H24V24H12.700z" fill="url(#wn)" /></svg>
        </button>
        <label className="mx-[3px] flex h-[31px] w-[218px] items-center rounded-full border border-[#b9dccd] bg-[#edf9f3] pl-[9px] pr-[4px]">
          <svg width="16" height="16" viewBox="0 0 16 16" fill="none" stroke="#222" strokeWidth="1.500"><circle cx="6.500" cy="6.500" r="5.500" /><path d="M10.500 10.500L15 15" strokeWidth="2" /></svg>
          <input aria-label="搜索" placeholder="搜索" className="min-w-0 flex-1 bg-transparent pl-[10px] text-[14px] outline-none placeholder:text-[#4b5c55]" />
          <svg width="48" height="24" viewBox="0 0 48 24">
            <ellipse cx="10" cy="9" rx="10" ry="6" fill="#f0bd7b" transform="rotate(-35 10 9)" /><ellipse cx="14" cy="6" rx="6" ry="5" fill="#f7cf93" transform="rotate(-35 14 6)" /><path d="M2 16c2-8 6-3 8-8M8 18c2-4 8 2 12-1M6 10l14 12M18 14l-2 9M3 12l5 6" fill="none" stroke="#d9566b" strokeWidth="2" />
            <ellipse cx="35" cy="18.500" rx="12" ry="4.500" fill="#8d7ab0" /><path d="M28 3c3-2 11-2 14 0l-1.500 14c-3 2-8 2-11 0z" fill="#54407a" /><path d="M29 12.500c3 2 9 2 12 0l-.5 4.500c-3 2-8 2-11 0z" fill="#9a83c4" />
          </svg>
        </label>
        <div className="flex items-center gap-[5px] pr-0.5">
          <Pinned label="任务视图"><svg width="24" height="24" viewBox="0 0 24 24"><path d="M0 6h18v17H0z" fill="#2b2b2b" /><path d="M7 1h17v16H7z" fill="#fff" opacity=".85" /><path d="M7 6h11v11H7z" fill="#bdbdbd" /></svg></Pinned>
          <Pinned label="文件资源管理器" state="run"><svg width="25" height="24" viewBox="0 0 25 24"><path d="M0 2.500Q0 1 1.500 1H9l3 3h12q1 0 1 1v5H0z" fill="#d89a10" /><path d="M0 7h11l3-3h11v18q0 1-1 1H1q-1 0-1-1z" fill="#ffcf48" /><path d="M4.500 23v-5q0-2 2-2h12q2 0 2 2v5z" fill="#1a85d6" /><path d="M8 20h9" stroke="#0b5ca8" strokeWidth="2" /></svg></Pinned>
          <Pinned label="Edge" state="run"><svg width="24" height="24" viewBox="0 0 24 24"><defs><linearGradient id="eg" x1="0" y1="0" x2="1" y2="0"><stop offset="0" stopColor="#1b9de2" /><stop offset="1" stopColor="#5fd35f" /></linearGradient></defs><circle cx="12" cy="12" r="12" fill="#0c59a4" /><path d="M0 12C0 5 5 0 12 0s12 5 12 10c0 4-3 6-7 6-3 0-4-1-3-3 1-3-2-6-6-5-4 0-7 2-8 4z" fill="url(#eg)" /><path d="M8 8.500C2 10 0 16 3 19.500 6 23 9 24 12 24 7 21 6 14 12 11c-1-2-2-3-4-2.500z" fill="#1b82d8" /><path d="M14 13c-1 3 3 5 8.500 3-2 4-8 5-11 2-2-2-1-5 1-6z" fill="#c9eedd" /></svg></Pinned>
          <Pinned label="Microsoft Store"><svg width="24" height="24" viewBox="0 0 24 24"><path d="M7 6V1.500h10V6" fill="none" stroke="#35b8f1" strokeWidth="2" /><path d="M0 5h24v16q0 3-3 3H3q-3 0-3-3z" fill="#124a86" /><path d="M7 9h4.500v4.500H7z" fill="#f25022" /><path d="M12.500 9H17v4.500h-4.500z" fill="#7fba00" /><path d="M7 14.500h4.500V19H7z" fill="#00a4ef" /><path d="M12.500 14.500H17V19h-4.500z" fill="#ffb900" /></svg></Pinned>
          <Pinned label="计算器" state="run"><svg width="19" height="24" viewBox="0 0 19 24"><rect width="19" height="24" rx="2" fill="#6b7884" /><path d="M2 2h15v4H2z" fill="#48cdf5" /><path d="M2 8h4v4H2zM7.500 8h4v4h-4zM13 8h4v4h-4zM2 13h4v4H2zM7.500 13h4v4h-4zM2 18h4v4H2zM7.500 18h4v4h-4z" fill="#dfe5ea" /><path d="M13 13h4v9h-4z" fill="#12508f" /></svg></Pinned>
          <Pinned label="微信" state="run"><svg width="25" height="22" viewBox="0 0 25 22"><path d="M9 1c5 0 9 3 9 7.500S14 16 9 16l-4 2 .5-3C2 13 0 11 0 8.500 0 4 4 1 9 1z" fill="#1fcf63" /><circle cx="6" cy="6.500" r="1.200" fill="#0d6a32" /><circle cx="12" cy="6.500" r="1.200" fill="#0d6a32" /><path d="M17.500 8c4 0 7 2.500 7 6 0 2-1 3.500-2.500 4.500l.5 2.500-3-1.500c-5 1-9-1.500-9-5.500 0-3.500 3-6 7-6z" fill="#ececec" /><circle cx="15" cy="12.500" r="1" fill="#777" /><circle cx="20" cy="12.500" r="1" fill="#777" /></svg></Pinned>
          <Pinned label="Chrome" state="run"><svg width="24" height="24" viewBox="0 0 24 24"><circle cx="12" cy="12" r="12" fill="#fbbc05" /><path d="M12 12l4 4-5 8A12 12 0 011.600 6z" fill="#34a853" /><path d="M1.600 6A12 12 0 0122.400 6.500H12L7 15z" fill="#ea4335" /><circle cx="12" cy="12" r="6" fill="#fff" /><circle cx="12" cy="12" r="4.600" fill="#4285f4" /></svg></Pinned>
          <Pinned label="财务" state="run"><svg width="24" height="24" viewBox="0 0 24 24"><rect width="24" height="24" rx="1.500" fill="#2f54ff" /><path d="M6.500 2.500L12 9l5.500-6.500M6 10h12M6 14.500h12M12 9v12" fill="none" stroke="#fff" strokeWidth="2" /></svg></Pinned>
          <Pinned label="Excel" state="on"><svg width="24" height="24" viewBox="0 0 24 24"><path d="M11 3h12.500v18H11z" fill="#fff" stroke="#217346" /><path d="M14 6h3M18.500 6h4M14 9h3M18.500 9h4M14 12h3M18.500 12h4M14 15h3M18.500 15h4M14 18h3M18.500 18h4" stroke="#217346" strokeWidth="1.800" /><path d="M0 2.500L14 0v24L0 21.500z" fill="#1d7044" /><path d="M4 8l5.500 8M9.500 8L4 16" stroke="#fff" strokeWidth="2" /></svg></Pinned>
        </div>
      </div>

      <div className="flex items-center justify-self-end pb-0.5 pr-[19px]">
        <button aria-label="显示隐藏的图标" className="flex w-8 justify-center"><svg width="11" height="7" viewBox="0 0 11 7" fill="none" stroke="#111" strokeWidth="1.500"><path d="M1 6l4.500-4.500L10 6" /></svg></button>
        <button aria-label="更新" className="flex w-8 justify-center"><svg width="17" height="17" viewBox="0 0 17 17" fill="none" stroke="#111" strokeWidth="1.300"><path d="M1 8a7 7 0 0113-3.500M15 1v4h-4M2 16v-4h4M2 12l4 4" /><circle cx="12.500" cy="12.500" r="4" fill="#0078d4" stroke="none" /></svg></button>
        <button className="w-8 text-[14px] text-black">中</button>
        <button className="w-[44px] text-[14px] text-black">拼</button>
        <button aria-label="网络和声音" className="flex w-[58px] items-center justify-center gap-2">
          <svg width="17" height="16" viewBox="0 0 17 16" fill="none" stroke="#111" strokeWidth="1.200"><path d="M9.500 1.500H2q-1 0-1 1v8q0 1 1 1h9.500V8M3.500 15h8M6 11.500V15M9 11.500V15M11.500 1.500h4v4l-1 1.500v5M11.500 1.500v4l1 1.500h2" /></svg>
          <svg width="17" height="14" viewBox="0 0 17 14" fill="none" stroke="#111" strokeWidth="1.200"><path d="M1 5v4h2.500L7 12.500v-11L3.500 5zM9 4.500a4 4 0 010 5M11.500 2.500a7 7 0 010 9M14 .8a10 10 0 010 12.400" /></svg>
        </button>
        <button className="w-[69px] text-right leading-[15px]">13:49<br />2025/12/16</button>
      </div>
    </div>
  );
}

export default function App() {
  return (
    <div className="flex h-screen flex-col overflow-hidden bg-[#e6e6e6] [font-family:'Noto_Sans','Noto_Sans_CJK_SC',sans-serif]">
      <TitleBar />
      <TabBar />
      <Ribbon />
      <div className="h-px shrink-0 bg-[#e6e6e6]" />
      <FormulaBar />
      <main className="flex min-h-0 flex-1">
        <Sheet />
        <VScroll />
      </main>
      <SheetTabs />
      <StatusBar />
      <Taskbar />
    </div>
  );
}
